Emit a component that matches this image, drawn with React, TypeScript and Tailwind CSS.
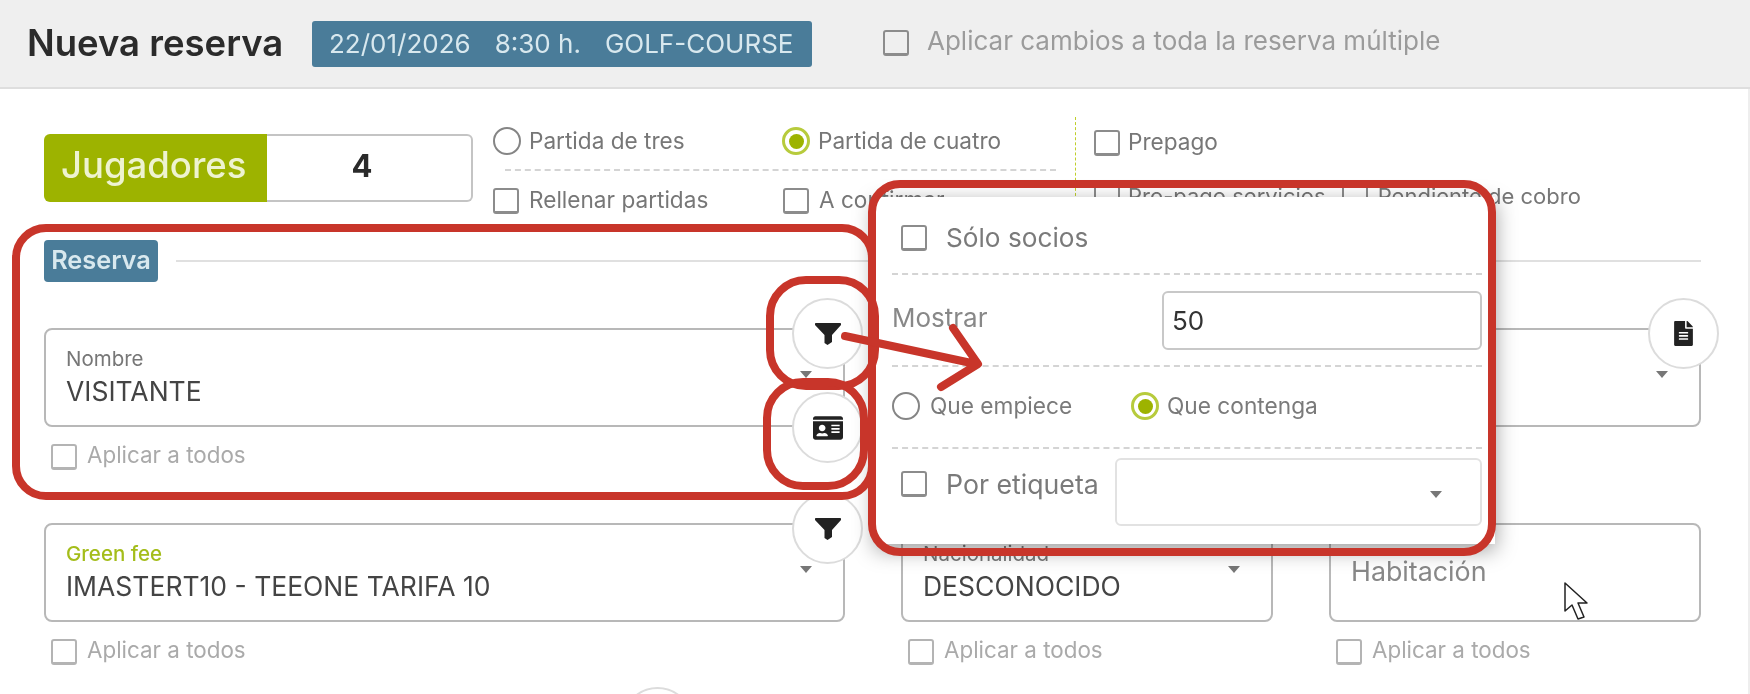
import { FC, ReactNode } from 'react'
import clsx from 'clsx'
import { FaFileAlt, FaIdCard } from 'react-icons/fa'

const Check: FC<{ light?: boolean; label: string; className?: string; textClassName?: string }> = ({
  light,
  label,
  className,
  textClassName = 'ml-[10px] -mt-[3px]',
}) => (
  <label className={clsx('flex items-center', className)}>
    <span
      className={clsx(
        'w-[26px] h-[26px] shrink-0 rounded-[3px] border-2 border-b-[3px] bg-transparent',
        light ? 'border-[#b4b4b4]' : 'border-[#8c8c8c]',
      )}
    />
    <span className={clsx('whitespace-nowrap leading-[26px]', textClassName)}>{label}</span>
  </label>
)

const Radio: FC<{ checked?: boolean; label: string; className?: string; textClassName?: string }> = ({
  checked,
  label,
  className,
  textClassName = 'ml-[8px]',
}) => (
  <label className={clsx('flex items-center', className)}>
    {checked ? (
      <span className="w-[28px] h-[28px] shrink-0 rounded-full border-[3px] border-[#b7cb3c] bg-white flex items-center justify-center">
        <span className="w-[15px] h-[15px] rounded-full bg-[#9db300]" />
      </span>
    ) : (
      <span className="w-[28px] h-[28px] shrink-0 rounded-full border-2 border-[#858585]" />
    )}
    <span className={clsx('whitespace-nowrap leading-[28px]', textClassName)}>{label}</span>
  </label>
)

const Caret: FC<{ className?: string }> = ({ className }) => (
  <span
    className={clsx(
      'absolute w-0 h-0 border-l-[6px] border-r-[6px] border-t-[7px] border-l-transparent border-r-transparent border-t-[#777]',
      className,
    )}
  />
)

const FilterIcon = () => (
  <svg width="26" height="22" viewBox="0 0 26 22" fill="currentColor">
    <path d="M0 1C0 .4.4 0 1 0H25C25.6 0 26 .4 26 1V2L17 12V19L12.5 22L9.5 20V12L0 2Z" />
  </svg>
)

const RoundButton: FC<{ className?: string; children?: ReactNode }> = ({ className, children }) => (
  <button className={clsx('absolute w-[71px] h-[71px] rounded-full border-2 border-[#dcdcdc] bg-white flex items-center justify-center text-[#222]', className)}>
    {children}
  </button>
)

const Field: FC<{
  label?: string
  labelClassName?: string
  value?: string
  placeholder?: string
  caret?: boolean
  className?: string
  children?: ReactNode
}> = ({ label, labelClassName, value, placeholder, caret, className, children }) => (
  <div className={clsx('relative h-[99px] rounded-[8px] border-2 border-[#b8b8b8] bg-white pl-[20px]', className)}>
    {label && (
      <div className={clsx('pt-[18px] text-[20.5px] leading-[22px]', labelClassName ?? 'text-[#777]')}>{label}</div>
    )}
    {value && <div className="mt-[7px] text-[26.5px] leading-[28px] text-[#444] whitespace-nowrap">{value}</div>}
    {placeholder && <div className="pt-[32px] text-[26.8px] leading-[28px] text-[#888]">{placeholder}</div>}
    {caret && <Caret className="right-[31px] top-[41px]" />}
    {children}
  </div>
)

const ApplyAll: FC<{ className?: string }> = ({ className }) => (
  <Check
    light
    label="Aplicar a todos"
    className={clsx('mt-[17px] ml-[7px] h-[25px]', className)}
    textClassName="ml-[10px] -mt-[3px] text-[22.4px] text-[#aaa]"
  />
)

const FilterPopover = () => (
  <div className="absolute left-[875px] top-[197px] w-[620px] h-[347px] bg-white shadow-[0_6px_20px_rgba(0,0,0,0.4)] pl-[17px] pr-[13px] text-[#7a7a7a]">
    <div className="h-[78px] border-b-2 border-dashed border-[#d4d4d4] pl-[9px] pt-[28px]">
      <Check label="Sólo socios" textClassName="ml-[19px] text-[26.2px]" />
    </div>
    <div className="h-[92px] border-b-2 border-dashed border-[#d4d4d4] flex items-start justify-between pt-[16px]">
      <span className="mt-[12px] text-[26px] leading-[30px] text-[#888]">Mostrar</span>
      <div className="w-[320px] h-[59px] rounded-[6px] border-2 border-[#c8c8c8] pl-[8px] flex items-center text-[26px] text-[#333]">
        50
      </div>
    </div>
    <div className="h-[82px] border-b-2 border-dashed border-[#d4d4d4] grid grid-cols-[239px_1fr] items-start pt-[25px] text-[22.7px]">
      <Radio label="Que empiece" textClassName="ml-[10px]" />
      <Radio checked label="Que contenga" />
    </div>
    <div className="flex items-start pt-[9px]">
      <Check label="Por etiqueta" className="ml-[9px] mt-[13px]" textClassName="ml-[19px] text-[26.7px]" />
      <div className="relative ml-auto w-[367px] h-[68px] rounded-[6px] border-2 border-[#e2e2e2]">
        <Caret className="right-[38px] top-[31px]" />
      </div>
    </div>
  </div>
)

// marcas rojas y cursor pintados encima de la captura
const Annotations = () => (
  <svg className="absolute inset-0 pointer-events-none" width="1750" height="694" fill="none">
    <g stroke="#c8352a" strokeWidth="8" strokeLinecap="round" strokeLinejoin="round">
      <rect x="16" y="228" width="856" height="268" rx="30" />
      <rect x="770" y="280" width="105" height="106" rx="36" />
      <rect x="767" y="382" width="97" height="104" rx="36" />
      <rect x="872" y="184" width="620" height="368" rx="28" />
      <path d="M845 336L976 364M953 328L978 364L941 387" />
    </g>
    <path
      d="M1565 583L1565 611L1572 605L1578 619L1584 617L1578 603L1587 603Z"
      fill="#fff"
      stroke="#222"
      strokeWidth="1.5"
      strokeLinejoin="round"
    />
  </svg>
)

export default function App() {
  return (
    <div className="relative w-[1750px] h-[694px] overflow-hidden bg-white text-[#777] blur-[0.5px] font-['Inter','Liberation_Sans',sans-serif]">
      <header className="h-[89px] bg-[#efefef] border-b-2 border-[#dedede] flex items-center pl-[27px]">
        <h1 className="w-[257px] text-[36.5px] font-semibold leading-none text-[#2b2b2b] whitespace-nowrap">Nueva reserva</h1>
        <div className="ml-[28px] w-[500px] h-[46px] rounded-[3px] bg-[#4a7c99] flex items-center gap-[24px] pl-[17px] text-[26px] text-[#d8e8ee]">
          <span>22/01/2026</span>
          <span>8:30 h.</span>
          <span>GOLF-COURSE</span>
        </div>
        <Check
          label="Aplicar cambios a toda la reserva múltiple"
          className="ml-[71px] mb-[2px]"
          textClassName="ml-[18px] -mt-[3px] text-[26px] text-[#9b9b9b]"
        />
      </header>

      <main className="h-[605px] pl-[44px] pr-[47px] pt-[28px] border-r-2 border-[#eeeeee]">
        <div className="flex h-[100px] text-[22.6px]">
          <div className="mt-[17px] w-[429px] h-[68px] flex">
            <div className="w-[223px] rounded-l-[6px] bg-[#9db300] flex items-center pl-[17px] pb-[6px] text-[36.5px] font-medium text-[#eef3d0]">
              Jugadores
            </div>
            <div className="flex-1 rounded-r-[6px] border-2 border-l-0 border-[#c4c4c4] flex items-center justify-center pr-[14px] pb-[4px] text-[31px] font-bold text-[#2a2a2a]">
              4
            </div>
          </div>

          <div className="ml-[20px] w-[582px] pt-[10px]">
            <div className="grid grid-cols-[289px_1fr]">
              <Radio label="Partida de tres" />
              <Radio checked label="Partida de cuatro" />
            </div>
            <div className="mt-[14px] ml-[12px] w-[551px] border-t-2 border-dashed border-[#d4d4d4]" />
            <div className="mt-[17px] grid grid-cols-[290px_1fr]">
              <Check label="Rellenar partidas" />
              <Check label="A confirmar" />
            </div>
          </div>

          <div className="h-[84px] border-l border-dashed border-[#bfcf2a] pl-[18px] pt-[13px]">
            <Check label="Prepago" textClassName="ml-[8px] -mt-[3px]" />
            <div className="mt-[28px] flex gap-[16px] text-[22px]">
              <Check label="Pro-pago servicios" textClassName="ml-[8px] -mt-[3px]" />
              <Check label="Pendiente de cobro" />
            </div>
          </div>
        </div>

        <div className="mt-[23px] flex items-center">
          <div className="w-[114px] h-[42px] rounded-[4px] bg-[#4a7c99] flex items-center justify-center pb-[2px] text-[25.3px] font-semibold text-[#d8e8ee]">
            Reserva
          </div>
          <div className="ml-[18px] flex-1 border-t-2 border-[#e0e0e0]" />
        </div>

        <div className="mt-[46px] grid grid-cols-[801px_372px_372px] gap-x-[56px] gap-y-[54px]">
          <div>
            <Field label="Nombre" value="VISITANTE" caret>
              <RoundButton className="-right-[20px] -top-[32px]">
                <FilterIcon />
              </RoundButton>
              <RoundButton className="-right-[20px] top-[62px]">
                <FaIdCard size={30} />
              </RoundButton>
            </Field>
            <ApplyAll />
          </div>
          <div className="col-span-2">
            <Field caret>
              <RoundButton className="-right-[20px] -top-[32px]">
                <FaFileAlt size={25} />
              </RoundButton>
            </Field>
          </div>

          <div>
            <Field label="Green fee" labelClassName="text-[#a4bd1a] font-medium" value="IMASTERT10 - TEEONE TARIFA 10" caret>
              <RoundButton className="-right-[20px] -top-[32px]">
                <FilterIcon />
              </RoundButton>
            </Field>
            <ApplyAll />
          </div>
          <div>
            <Field label="Nacionalidad" value="DESCONOCIDO" caret />
            <ApplyAll />
          </div>
          <div>
            <Field placeholder="Habitación" />
            <ApplyAll />
          </div>
        </div>

        <div className="relative mt-[23px] h-[71px]">
          <RoundButton className="left-[578px] top-0" />
        </div>
      </main>

      <FilterPopover />
      <Annotations />
    </div>
  )
}
